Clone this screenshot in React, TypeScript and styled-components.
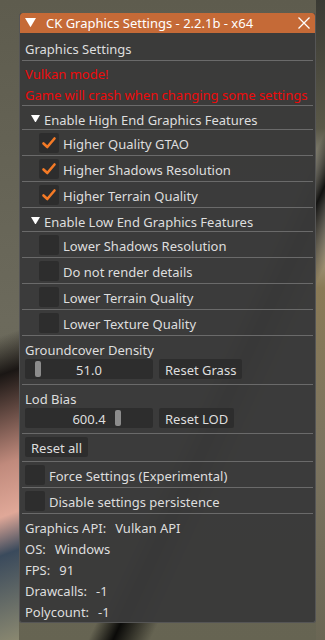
import styled, { createGlobalStyle } from "styled-components";

const GlobalStyle = createGlobalStyle`
  html, body {
    margin: 0;
    padding: 0;
  }
  body {
    width: 325px;
    height: 640px;
    overflow: hidden;
    font-family: "Noto Sans", "Open Sans", sans-serif;
    background:
      linear-gradient(115deg, transparent 62%, rgba(0, 0, 0, 0.9) 66%, transparent 72%) no-repeat,
      linear-gradient(160deg, rgba(0,0,0,0) 0%, rgba(0,0,0,0) 52%, #1a1614 58%, #c08a7c 72%, #e0a898 80%, #3a4a5c 86%, #8a8870 100%) 0 0 / 19px 640px no-repeat,
      linear-gradient(180deg, #3a3a34 0%, #5a5848 20%, #c8c4b8 32%, #8a7a56 45%, #7c7460 70%, #6a6654 100%) 316px 0 / 9px 640px no-repeat,
      linear-gradient(180deg, #5e5c4e 0%, #6c6a5c 50%, #666452 100%);
  }
`;

const Window = styled.div`
  margin: 13px 0 0 19px;
  width: 297px;
  height: 610px;
  background: rgba(58, 58, 58, 0.97);
  border: 1px solid #555;
  border-top: none;
  border-radius: 3px;
  box-sizing: border-box;
  color: #dedede;
  font-size: 13px;
  overflow: hidden;
`;

const TitleBar = styled.div`
  height: 20px;
  background: #c56a37;
  display: flex;
  align-items: center;
  padding: 0 4px 0 5px;
  color: #fff;
  font-size: 13px;
  border-radius: 3px 3px 0 0;
`;

const TitleText = styled.span`
  flex: 1;
  margin-left: 10px;
`;

const Body = styled.div`
  padding: 0 2px;
  display: flex;
  flex-direction: column;
`;

const Row = styled.div<{ h: number; indent?: number; top?: number }>`
  height: ${(p) => p.h}px;
  display: flex;
  align-items: center;
  padding-left: ${(p) => p.indent ?? 3}px;
  padding-top: ${(p) => p.top ?? 0}px;
  border-bottom: 1px solid #6a6a6a;
`;

const Label = styled.span`
  padding-top: 2px;
  white-space: nowrap;
`;

const Block = styled.div<{ pad?: string; last?: boolean }>`
  display: flex;
  flex-direction: column;
  padding: ${(p) => p.pad ?? "0 0 0 3px"};
  border-bottom: ${(p) => (p.last ? "none" : "1px solid #6a6a6a")};
`;

const Line = styled.div<{ red?: boolean; h?: number }>`
  height: ${(p) => p.h ?? 21}px;
  line-height: ${(p) => (p.h ?? 21) + 2}px;
  color: ${(p) => (p.red ? "#ee0a0a" : "#dedede")};
  white-space: nowrap;
`;

const Header = styled.div`
  display: flex;
  align-items: center;
  gap: 4px;
  padding-left: 9px;
`;

const CheckBox = styled.div`
  width: 20px;
  height: 20px;
  border-radius: 2px;
  background: #2d2d2d;
  display: flex;
  align-items: center;
  justify-content: center;
  margin-right: 4px;
  flex-shrink: 0;
`;

const Controls = styled.div`
  display: flex;
  gap: 6px;
`;

const Slider = styled.div`
  width: 128px;
  height: 20px;
  line-height: 22px;
  background: #2d2d2d;
  border-radius: 2px;
  text-align: center;
  position: relative;
`;

const Grab = styled.div`
  position: absolute;
  top: 2px;
  width: 6px;
  height: 16px;
  border-radius: 2px;
  background: #8c8c8c;
`;

const Button = styled.div`
  height: 20px;
  line-height: 22px;
  padding: 0 6px;
  background: #2d2d2d;
  border-radius: 2px;
  white-space: nowrap;
`;

const Value = styled.span`
  margin-left: 9px;
`;

const Triangle = ({ size }: { size: number }) => (
  <svg width={size} height={size * 0.85} viewBox="0 0 10 8.5">
    <path d="M0 0 L10 0 L5 8.5 Z" fill="#fff" />
  </svg>
);

const Check = () => (
  <svg width="20" height="20" viewBox="0 0 20 20">
    <path d="M4.5 10.5 L8.3 14 L15.5 5.5" stroke="#f47a26" strokeWidth="2.6" fill="none" strokeLinecap="round" strokeLinejoin="round" />
  </svg>
);

const CheckRow = ({ label, checked, indent }: { label: string; checked?: boolean; indent: number }) => (
  <Row h={25} indent={indent}>
    <CheckBox>{checked && <Check />}</CheckBox>
    <Label>{label}</Label>
  </Row>
);

const SectionHeader = ({ label }: { label: string }) => (
  <Row h={21} top={2} indent={0}>
    <Header>
      <Triangle size={9} />
      <Label>{label}</Label>
    </Header>
  </Row>
);

export default function App() {
  return (
    <>
      <GlobalStyle />
      <Window>
        <TitleBar>
          <Triangle size={11} />
          <TitleText>CK Graphics Settings - 2.2.1b - x64</TitleText>
          <svg width="14" height="14" viewBox="0 0 14 14">
            <path d="M1.5 1.5 L12.5 12.5 M12.5 1.5 L1.5 12.5" stroke="#fff" strokeWidth="1.3" />
          </svg>
        </TitleBar>
        <Body>
          <Row h={24} top={3}>
            <Label>Graphics Settings</Label>
          </Row>
          <Block pad="2px 0 0 3px">
            <Line red>Vulkan mode!</Line>
            <Line red>Game will crash when changing some settings</Line>
          </Block>
          <SectionHeader label="Enable High End Graphics Features" />
          <CheckRow indent={17} checked label="Higher Quality GTAO" />
          <CheckRow indent={17} checked label="Higher Shadows Resolution" />
          <CheckRow indent={17} checked label="Higher Terrain Quality" />
          <SectionHeader label="Enable Low End Graphics Features" />
          <CheckRow indent={17} label="Lower Shadows Resolution" />
          <CheckRow indent={17} label="Do not render details" />
          <CheckRow indent={17} label="Lower Terrain Quality" />
          <CheckRow indent={17} label="Lower Texture Quality" />
          <Block pad="4px 0 5px 3px">
            <Line h={19}>Groundcover Density</Line>
            <Controls>
              <Slider>
                <Grab style={{ left: 10 }} />
                51.0
              </Slider>
              <Button>Reset Grass</Button>
            </Controls>
          </Block>
          <Block pad="4px 0 5px 3px">
            <Line h={19}>Lod Bias</Line>
            <Controls>
              <Slider>
                <Grab style={{ left: 90 }} />
                600.4
              </Slider>
              <Button>Reset LOD</Button>
            </Controls>
          </Block>
          <Block pad="3px 0 4px 3px">
            <Controls>
              <Button>Reset all</Button>
            </Controls>
          </Block>
          <CheckRow indent={3} label="Force Settings (Experimental)" />
          <CheckRow indent={3} label="Disable settings persistence" />
        </Body>
        <Block pad="3px 0 0 5px" last>
          <Line>Graphics API:<Value>Vulkan API</Value></Line>
          <Line>OS:<Value>Windows</Value></Line>
          <Line>FPS:<Value>91</Value></Line>
          <Line>Drawcalls:<Value>-1</Value></Line>
          <Line>Polycount:<Value>-1</Value></Line>
        </Block>
      </Window>
    </>
  );
}
